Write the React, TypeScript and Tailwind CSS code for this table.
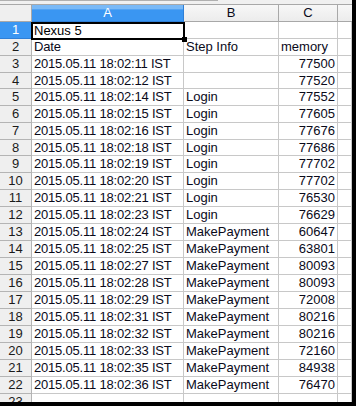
import React from "react";

const rows: [string, string, string][] = [
  ["2015.05.11 18:02:11 IST", "", "77500"],
  ["2015.05.11 18:02:12 IST", "", "77520"],
  ["2015.05.11 18:02:14 IST", "Login", "77552"],
  ["2015.05.11 18:02:15 IST", "Login", "77605"],
  ["2015.05.11 18:02:16 IST", "Login", "77676"],
  ["2015.05.11 18:02:18 IST", "Login", "77686"],
  ["2015.05.11 18:02:19 IST", "Login", "77702"],
  ["2015.05.11 18:02:20 IST", "Login", "77702"],
  ["2015.05.11 18:02:21 IST", "Login", "76530"],
  ["2015.05.11 18:02:23 IST", "Login", "76629"],
  ["2015.05.11 18:02:24 IST", "MakePayment", "60647"],
  ["2015.05.11 18:02:25 IST", "MakePayment", "63801"],
  ["2015.05.11 18:02:27 IST", "MakePayment", "80093"],
  ["2015.05.11 18:02:28 IST", "MakePayment", "80093"],
  ["2015.05.11 18:02:29 IST", "MakePayment", "72008"],
  ["2015.05.11 18:02:31 IST", "MakePayment", "80216"],
  ["2015.05.11 18:02:32 IST", "MakePayment", "80216"],
  ["2015.05.11 18:02:33 IST", "MakePayment", "72160"],
  ["2015.05.11 18:02:35 IST", "MakePayment", "84938"],
  ["2015.05.11 18:02:36 IST", "MakePayment", "76470"],
];

const grid = "grid grid-cols-[32px_152px_95px_59px_1fr]";

function Row({
  n,
  a,
  b,
  c,
  short,
  leftC,
}: {
  n: number;
  a: string;
  b: string;
  c: string;
  short?: boolean;
  leftC?: boolean;
}) {
  const h = short ? "h-[16px] leading-[15px]" : "h-[17px] leading-[16px]";
  const cell = `${h} border-r border-b border-[#c8c8c8] whitespace-nowrap overflow-hidden`;
  return (
    <div className={grid}>
      <div className={`${h} border-r border-b border-[#b4b4b4] bg-[#efefef] text-center text-[#1a1a1a]`}>{n}</div>
      <div className={`${cell} pl-[2px] tracking-[-0.2px]`}>{a}</div>
      <div className={`${cell} pl-[2px]`}>{b}</div>
      <div className={leftC ? `${cell} pl-[2px]` : `${cell} pr-[2px] text-right`}>{c}</div>
      <div className={cell} />
    </div>
  );
}

export default function App() {
  return (
    <div
      className="w-[356px] h-[406px] overflow-hidden bg-white border-r-4 border-b-4 border-black text-[13px] text-[#0a0a1a]"
      style={{ fontFamily: '"Liberation Sans", Arial, sans-serif' }}
    >
      {/* top strip */}
      <div className="flex h-[5px] bg-[#f0f0f0] border-b border-[#a8a8a8]">
        <div className="w-[218px] h-[1px] bg-[#b0b0b0]" />
      </div>
      {/* column headers */}
      <div className={grid}>
        <div className="h-[17px] border-r border-b border-[#a8a8a8] bg-[#efefef]" />
        <div className="h-[17px] border-r border-b border-[#2f7fd6] bg-[linear-gradient(#7ab9f6_0%,#7ab9f6_25%,#3a96f2_30%,#3a96f2_100%)] text-center leading-[16px] text-white">
          A
        </div>
        <div className="h-[17px] border-r border-b border-[#a8a8a8] bg-[linear-gradient(#f7f7f7,#ececec)] text-center leading-[16px]">
          B
        </div>
        <div className="h-[17px] border-r border-b border-[#a8a8a8] bg-[linear-gradient(#f7f7f7,#ececec)] text-center leading-[16px]">
          C
        </div>
        <div className="h-[17px] border-b border-[#a8a8a8] bg-[linear-gradient(#f7f7f7,#ececec)]" />
      </div>
      {/* row 1 */}
      <div className={grid}>
        <div className="h-[17px] border-r border-b border-[#2f7fd6] bg-[#3a96f2] text-center leading-[16px] text-white">1</div>
        <div className="relative h-[17px] border-r border-b border-[#c8c8c8]">
          <div className="absolute left-[-1px] top-[0px] right-[-2px] bottom-[-2px] border-2 border-black pl-[1px] leading-[14px] text-[#000]">
            Nexus 5
          </div>
          <div className="absolute right-[-4px] bottom-[-4px] w-[5px] h-[5px] bg-black" />
        </div>
        <div className="h-[17px] border-r border-b border-[#c8c8c8]" />
        <div className="h-[17px] border-r border-b border-[#c8c8c8]" />
        <div className="h-[17px] border-r border-b border-[#c8c8c8]" />
      </div>
      <Row n={2} a="Date" b="Step Info" c="memory" leftC />
      {rows.map((r, i) => (
        <Row key={i} n={i + 3} a={r[0]} b={r[1]} c={r[2]} short={i === 1 || i === 5} />
      ))}
      <Row n={23} a="" b="" c="" />
    </div>
  );
}
